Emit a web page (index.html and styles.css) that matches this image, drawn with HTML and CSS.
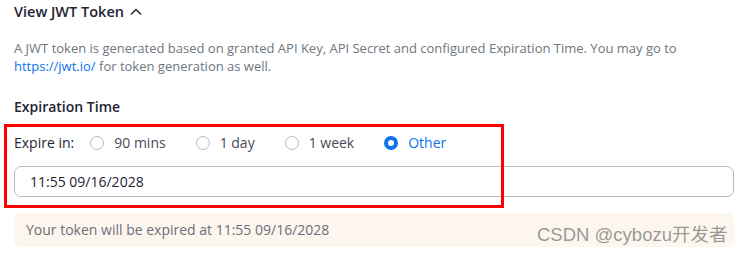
FILE: index.html
```html
<!DOCTYPE html>
<html lang="en">

<head>
	<meta charset="UTF-8">
	<title>View JWT Token</title>
	<link rel="stylesheet" href="styles.css">
</head>

<body>
	<div class="panel">
		<div class="toggle">
			View JWT Token
			<svg class="chevron" width="12" height="8" viewBox="0 0 12 8">
				<path d="M1 6.5 L6 1.5 L11 6.5" fill="none" stroke="#232333" stroke-width="1.5" />
			</svg>
		</div>

		<p class="desc">A JWT token is generated based on granted API Key, API Secret and configured Expiration Time. You may go to <a href="#">https://jwt.io/</a> for token generation as well.</p>

		<div class="section-title">Expiration Time</div>

		<div class="expire-row">
			<span class="expire-label">Expire in:</span>
			<label class="radio"><span class="dot"></span>90 mins</label>
			<label class="radio"><span class="dot"></span>1 day</label>
			<label class="radio"><span class="dot"></span>1 week</label>
			<label class="radio checked"><span class="dot"></span>Other</label>
		</div>

		<div class="date-input">11:55 09/16/2028</div>

		<div class="notice">Your token will be expired at 11:55 09/16/2028</div>

		<div class="highlight"></div>
	</div>

	<div class="watermark">CSDN @cybozu开发者</div>
</body>

</html>
```

FILE: styles.css
```css
body {
	margin: 0;
	font-family: 'Open Sans', sans-serif;
	color: #232333;
	background-color: white;
}

.panel {
	position: relative;
	padding: 2px 8px 0 14px;
}

.toggle {
	display: flex;
	align-items: center;
	font-size: 14.5px;
	font-weight: 600;
	line-height: 20px;
}

.chevron {
	margin-left: 6px;
}

.desc {
	margin: 17px 0 0;
	font-size: 13px;
	line-height: 18px;
	color: #6e7680;
}

.desc a {
	color: #0e72ed;
	text-decoration: none;
}

.section-title {
	margin-top: 22px;
	font-size: 14px;
	font-weight: 600;
	line-height: 20px;
}

.expire-row {
	display: flex;
	align-items: center;
	margin-top: 16px;
	font-size: 14px;
	line-height: 20px;
}

.expire-label {
	margin-right: 16px;
}

.radio {
	display: flex;
	align-items: center;
	margin-right: 30px;
	color: #4a4a5a;
}

.dot {
	width: 14px;
	height: 14px;
	border: 1px solid #bab9c8;
	border-radius: 50%;
	margin-right: 10px;
	box-sizing: border-box;
}

.radio.checked {
	color: #0e72ed;
}

.radio.checked .dot {
	border: 4px solid #0e72ed;
	background-color: white;
}

.date-input {
	margin-top: 13px;
	height: 31px;
	box-sizing: border-box;
	border: 1px solid #bab9c8;
	border-radius: 7px;
	padding: 0 15px;
	font-size: 14px;
	line-height: 29px;
}

.notice {
	margin-top: 16px;
	height: 34px;
	border-radius: 7px;
	background-color: #fdf6ee;
	padding: 0 12px;
	font-size: 14px;
	line-height: 34px;
	color: #6e6e7a;
}

.highlight {
	position: absolute;
	left: 4px;
	top: 124px;
	width: 500px;
	height: 84px;
	box-sizing: border-box;
	border: 3px solid #ff0000;
}

.watermark {
	position: absolute;
	left: 537px;
	top: 224px;
	font-family: 'Liberation Sans', 'Noto Sans CJK SC', sans-serif;
	font-size: 18.5px;
	line-height: 22px;
	color: rgba(120, 120, 120, 0.75);
}
```
